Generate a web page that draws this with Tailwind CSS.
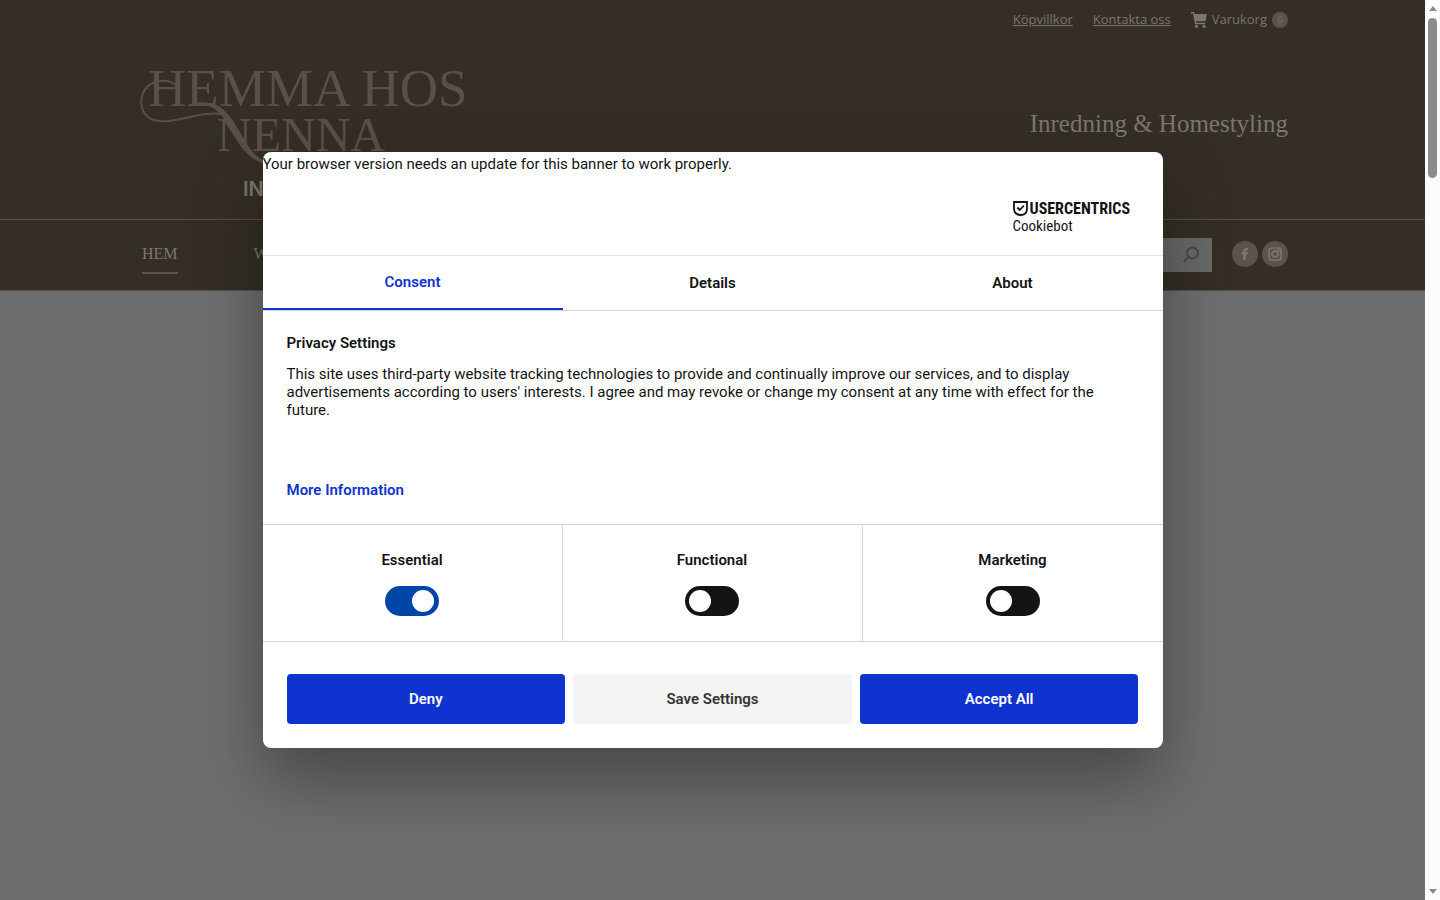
<!DOCTYPE html>
<html lang="sv">
<head>
    <meta charset="UTF-8">
    <meta name="viewport" content="width=device-width, initial-scale=1.0">
    <title>Hemma hos Nenna</title>
    <script src="https://cdn.jsdelivr.net/npm/@tailwindcss/browser@4"></script>
</head>
<body class="flex h-screen overflow-hidden bg-[#6e6e6e] font-['Roboto',sans-serif] text-[15px] text-[#141414]">
    <div class="relative flex-1 min-w-0 overflow-hidden">
        <header class="bg-[#342e25] border-b border-[#5a4d42] text-[#7b766f]">
            <!-- Top bar -->
            <div class="h-10 px-[137px] flex items-center justify-end gap-5 font-['Open_Sans',sans-serif] text-[13px]">
                <a href="#" class="underline">Köpvillkor</a>
                <a href="#" class="underline">Kontakta oss</a>
                <a href="#" class="flex items-center gap-[5px]">
                    <svg class="w-4 h-4" viewBox="0 0 16 16" fill="currentColor" aria-hidden="true">
                        <path d="M0 0h3.200l.4 2H16l-1.400 7.300H5l.3 1.400h8.900v1.600H4L2 1.600H0z"/>
                        <circle cx="5.4" cy="14.4" r="1.6"/>
                        <circle cx="13" cy="14.4" r="1.6"/>
                    </svg>
                    <span>Varukorg</span>
                    <span class="w-4 h-4 rounded-full bg-[#5e524b] text-[9px] flex items-center justify-center">0</span>
                </a>
            </div>

            <!-- Logo and tagline -->
            <div class="h-[180px] pl-[140px] pr-[137px] flex justify-between border-b border-[#5a4d42]">
                <a href="#" class="block mt-3" aria-label="Hemma hos Nenna">
                    <svg class="w-[330px] h-[150px] text-[#5b5049]" viewBox="0 0 330 150" fill="currentColor">
                        <text x="8" y="54" font-family="Liberation Serif, serif" font-size="53">HEMMA HOS</text>
                        <text x="77" y="99" font-family="Liberation Serif, serif" font-size="48">NENNA</text>
                        <path d="M37 34C28 26 15 28 8 34C-1 43-1 57 8 65C19 73 36 68 50 65C64 61 75 61 84 62" fill="none" stroke="currentColor" stroke-width="2"/>
                        <path d="M50 52C66 48 76 51 85 59C101 75 106 101 125 109V112C102 106 96 82 82 64C74 54 64 50 50 53z"/>
                        <text x="103" y="144" fill="#7b766f" font-family="Inter, sans-serif" font-weight="600" font-size="20">IN</text>
                    </svg>
                </a>
                <p class="mt-[68px] font-['Liberation_Serif',serif] text-[25px] leading-8">Inredning &amp; Homestyling</p>
            </div>

            <!-- Navigation -->
            <div class="h-[70px] pl-[142px] pr-[137px] flex items-center">
                <nav class="flex gap-[76px] font-['Liberation_Serif',serif] text-base leading-9">
                    <a href="#" class="border-b-2 border-[#5e524b]">HEM</a>
                    <a href="#" class="border-b-2 border-transparent">W</a>
                </nav>
                <form class="relative ml-auto mr-5">
                    <input type="search" aria-label="Sök" class="block w-48 h-[34px] bg-[#686868]">
                    <button type="button" aria-label="Sök" class="absolute right-3 top-2">
                        <svg class="w-[18px] h-[18px]" viewBox="0 0 18 18" fill="none" stroke="#494949" stroke-width="2">
                            <circle cx="10.5" cy="7" r="5.5"/>
                            <path d="M6.5 11L1.5 16"/>
                        </svg>
                    </button>
                </form>
                <div class="flex gap-1 pb-0.5">
                    <a href="#" aria-label="Facebook" class="w-[26px] h-[26px] rounded-full bg-[#5e524b] flex items-center justify-center">
                        <svg class="w-4 h-4" viewBox="0 0 16 16" fill="currentColor">
                            <path d="M6.3 14V8.5H4.5V6h1.8V4.7C6.3 2.8 7.3 2 9 2h2v2.3H9.7c-.6 0-.8.3-.8.8V6H11l-.3 2.5H8.9V14z"/>
                        </svg>
                    </a>
                    <a href="#" aria-label="Instagram" class="w-[26px] h-[26px] rounded-full bg-[#5e524b] flex items-center justify-center">
                        <svg class="w-4 h-4" viewBox="0 0 16 16" fill="none" stroke="currentColor" stroke-width="1.7">
                            <rect x="2" y="2" width="12" height="12" rx="2.5"/>
                            <circle cx="8" cy="8" r="3"/>
                            <circle cx="11.6" cy="4.4" r=".4"/>
                        </svg>
                    </a>
                </div>
            </div>
        </header>

        <!-- Consent dialog -->
        <div class="absolute inset-0 flex items-center justify-center">
            <div role="dialog" aria-label="Privacy Settings" class="w-full max-w-[900px] rounded-lg bg-white overflow-hidden shadow-[0_32px_68px_rgba(0,0,0,0.36)]">
                <p class="leading-6">Your browser version needs an update for this banner to work properly.</p>
                <div class="h-20 pr-9 flex items-center justify-end border-b border-[#e4e4e4]">
                    <div class="w-[114px] mt-1 font-['Roboto_Condensed','Liberation_Sans_Narrow','Roboto',sans-serif]">
                        <div class="flex items-center gap-0.5">
                            <svg class="w-[15px] h-[15px] shrink-0" viewBox="0 0 15 15" fill="none" stroke="#141414" stroke-width="1.8">
                                <path d="M1 1h13v6.500c0 4-2.500 6.500-6.500 6.500S1 11.500 1 7.500z"/>
                                <path d="M4.300 6.500l2.500 2.500 4.200-4.500"/>
                            </svg>
                            <span class="text-base leading-4 font-bold">USERCENTRICS</span>
                        </div>
                        <div class="text-[15px] leading-[18px]">Cookiebot</div>
                    </div>
                </div>

                <div role="tablist" class="grid grid-cols-3 h-[55px] border-b border-[#d6d6d6] font-semibold">
                    <button type="button" role="tab" aria-selected="true" class="border-b-2 border-[#1032cf] text-[#1032cf]">Consent</button>
                    <button type="button" role="tab" aria-selected="false">Details</button>
                    <button type="button" role="tab" aria-selected="false">About</button>
                </div>

                <div class="h-[213px] px-6 pt-6">
                    <h2 class="font-semibold leading-4">Privacy Settings</h2>
                    <p class="mt-[14px] leading-[18px]">This site uses third-party website tracking technologies to provide and continually improve our services, and to display advertisements according to users' interests. I agree and may revoke or change my consent at any time with effect for the future.</p>
                    <a href="#" class="block mt-[62px] leading-[18px] font-semibold text-[#1032cf]">More Information</a>
                </div>

                <div class="grid grid-cols-3 h-[118px] border-y border-[#d6d6d6] divide-x divide-[#d6d6d6] font-semibold">
                    <label class="flex flex-col items-center pt-[23px]">
                        <span class="leading-6">Essential</span>
                        <input type="checkbox" checked class="appearance-none mt-[14px] w-[54px] h-[30px] rounded-full bg-[#141414] checked:bg-[#0046a6] before:block before:w-[22px] before:h-[22px] before:m-1 before:rounded-full before:bg-white checked:before:ml-[27px]">
                    </label>
                    <label class="flex flex-col items-center pt-[23px]">
                        <span class="leading-6">Functional</span>
                        <input type="checkbox" class="appearance-none mt-[14px] w-[54px] h-[30px] rounded-full bg-[#141414] checked:bg-[#0046a6] before:block before:w-[22px] before:h-[22px] before:m-1 before:rounded-full before:bg-white checked:before:ml-[27px]">
                    </label>
                    <label class="flex flex-col items-center pt-[23px]">
                        <span class="leading-6">Marketing</span>
                        <input type="checkbox" class="appearance-none mt-[14px] w-[54px] h-[30px] rounded-full bg-[#141414] checked:bg-[#0046a6] before:block before:w-[22px] before:h-[22px] before:m-1 before:rounded-full before:bg-white checked:before:ml-[27px]">
                    </label>
                </div>

                <div class="grid grid-cols-3 gap-2 px-6 pt-8 pb-6 font-semibold">
                    <button type="button" class="h-[50px] rounded bg-[#1032cf] text-white">Deny</button>
                    <button type="button" class="h-[50px] rounded bg-[#f4f4f4] text-[#333]">Save Settings</button>
                    <button type="button" class="h-[50px] rounded bg-[#1032cf] text-white">Accept All</button>
                </div>
            </div>
        </div>
    </div>

    <!-- Scrollbar -->
    <div class="w-[15px] shrink-0 bg-[#fcfcfc] flex flex-col items-center py-[6px]" aria-hidden="true">
        <svg class="w-2 h-[5px]" viewBox="0 0 8 5" fill="#8b8b8b"><path d="M0 5L4 0l4 5z"/></svg>
        <div class="mt-[7px] w-[9px] h-40 rounded-full bg-[#8b8b8b]"></div>
        <svg class="mt-auto w-2 h-[5px]" viewBox="0 0 8 5" fill="#8b8b8b"><path d="M0 0h8L4 5z"/></svg>
    </div>
</body>
</html>
